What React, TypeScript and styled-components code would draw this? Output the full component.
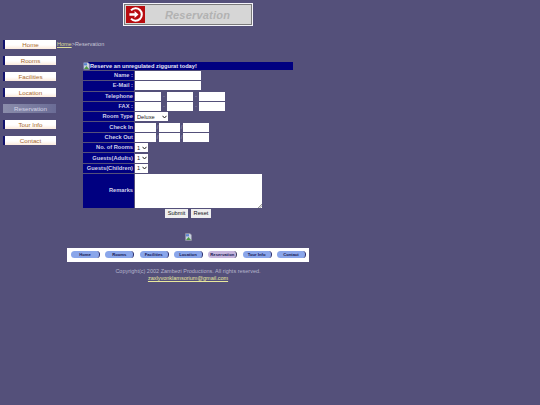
import React from 'react'
import styled, { createGlobalStyle } from 'styled-components'

const GlobalStyle = createGlobalStyle`
  html, body {
    margin: 0;
    padding: 0;
    background: #54507a;
    font-family: "Liberation Sans", Arial, sans-serif;
  }
`

const chevron = "url(\"data:image/svg+xml,%3Csvg xmlns='http://www.w3.org/2000/svg' width='5' height='4' viewBox='0 0 5 4'%3E%3Cpath d='M0.5 0.8L2.5 3L4.5 0.8' fill='none' stroke='%23222' stroke-width='1'/%3E%3C/svg%3E\")"

const Page = styled.div`
  width: 376px;
  height: 405px;
  display: flex;
  flex-direction: column;
  align-items: center;
  padding-top: 3px;
  box-sizing: border-box;
`

const Banner = styled.div`
  width: 130px;
  height: 23px;
  box-sizing: border-box;
  border: 1px solid #f4f4fa;
  background: #d6d6d6;
  box-shadow: inset 0 0 0 1px #7a7a7a;
  padding: 2px;
  display: flex;
  align-items: stretch;
`

const BannerIcon = styled.div`
  width: 19px;
  background: #b80c10;
  display: flex;
  align-items: center;
  justify-content: center;
`

const BannerTitle = styled.div`
  flex: 1;
  text-align: center;
  font-size: 11px;
  line-height: 19px;
  font-weight: bold;
  font-style: italic;
  letter-spacing: 0.2px;
  color: #b2b2b2;
`

const Body = styled.div`
  align-self: stretch;
  display: flex;
  align-items: flex-start;
  margin-top: 14px;
`

const SideNav = styled.nav`
  width: 57px;
  flex: none;
  padding: 0 1px 0 3px;
  box-sizing: border-box;
  display: flex;
  flex-direction: column;
  gap: 7px;
`

const SideLink = styled.a<{ $active?: boolean }>`
  height: 9px;
  box-sizing: border-box;
  font-size: 6.2px;
  line-height: 9px;
  text-align: center;
  color: ${({ $active }) => ($active ? '#d4d4e6' : '#a8692c')};
  background: ${({ $active }) =>
    $active ? 'linear-gradient(90deg, #8a8caa, #6a6c96)' : 'linear-gradient(#ffffff 55%, #fbeadc)'};
  border-left: 2px solid ${({ $active }) => ($active ? '#8a8caa' : '#12126e')};
`

const Main = styled.div`
  flex: 1;
  min-width: 0;
`

const Crumbs = styled.div`
  font-size: 5.5px;
  line-height: 8px;
  color: #c6c6d6;
  a {
    color: #dcdc98;
    text-decoration: underline;
  }
`

const FormTable = styled.table`
  margin: 13px 0 0 25px;
  width: 212px;
  border-collapse: separate;
  border-spacing: 1px;
  table-layout: fixed;
  font-size: 5.7px;
  font-weight: bold;
  color: #cfcfe8;
`

const LabelCol = styled.col`
  width: 51px;
`

const TitleCell = styled.td`
  height: 8px;
  padding: 0;
  background: #000080;
  color: #e4e4f4;
  line-height: 8px;
  white-space: nowrap;
`

const TitleInner = styled.div`
  display: flex;
  align-items: center;
`

const LabelCell = styled.td`
  height: 9.3px;
  padding: 0 1px 0 0;
  background: #000080;
  text-align: right;
  white-space: nowrap;
  vertical-align: middle;
  line-height: 9px;
`

const FieldCell = styled.td`
  padding: 0;
  vertical-align: middle;
  line-height: 0;
  white-space: nowrap;
`

const FieldRow = styled.div`
  display: flex;
  align-items: center;
`

const Sep = styled.span<{ $w: number }>`
  width: ${({ $w }) => $w}px;
  text-align: center;
  font-size: 5.5px;
  line-height: 9px;
  font-weight: normal;
  color: #a4a4c0;
`

const Field = styled.input<{ $w: number }>`
  width: ${({ $w }) => $w}px;
  height: 9px;
  box-sizing: border-box;
  border: 0;
  padding: 0;
  margin: 0;
  background: #fff;
  display: block;
`

const Picker = styled.select<{ $w: number }>`
  width: ${({ $w }) => $w}px;
  height: 9px;
  box-sizing: border-box;
  border: 0;
  padding: 0 0 0 2px;
  margin: 0;
  appearance: none;
  background: #fff ${chevron} no-repeat right 1.5px center;
  font-family: "Liberation Sans", Arial, sans-serif;
  font-size: 5.7px;
  color: #222;
  display: block;
`

const Remarks = styled.textarea`
  display: block;
  width: 127px;
  height: 34px;
  box-sizing: border-box;
  border: 0;
  margin: 0;
  padding: 0;
  resize: none;
  background: linear-gradient(135deg, transparent 50%, #9a9a9a 50%, #fff 70%, #9a9a9a 70%, #fff 85%) no-repeat right 0 bottom 0 / 4px 4px, #fff;
`

const Buttons = styled.div`
  width: 210px;
  margin: 0 0 0 26px;
  display: flex;
  justify-content: center;
  gap: 3px;
`

const FormButton = styled.button<{ $w: number }>`
  width: ${({ $w }) => $w}px;
  height: 9px;
  box-sizing: border-box;
  padding: 0;
  border: 0;
  background: #efefef;
  font-family: "Liberation Sans", Arial, sans-serif;
  font-size: 5.7px;
  line-height: 9px;
  color: #111;
`

const BrokenWrap = styled.div<{ $center?: boolean }>`
  display: ${({ $center }) => ($center ? 'flex' : 'inline-flex')};
  flex: none;
  margin-top: ${({ $center }) => ($center ? '15px' : '0')};
  line-height: 0;
`

const FooterBar = styled.div`
  width: 242px;
  height: 14px;
  margin-top: 7px;
  box-sizing: border-box;
  background: #fff;
  padding: 0 3px 0 4px;
  display: flex;
  align-items: center;
  justify-content: space-between;
`

const Pill = styled.a<{ $active?: boolean }>`
  width: 29px;
  height: 7px;
  box-sizing: border-box;
  border-radius: 4px;
  font-size: 4.2px;
  font-weight: bold;
  line-height: 7px;
  text-align: center;
  color: #141450;
  background: ${({ $active }) => ($active ? '#c4b4dc' : '#8aa6ea')};
  border-right: 1px solid ${({ $active }) => ($active ? '#3c3c5c' : '#30306c')};
`

const Copy = styled.div`
  margin-top: 6px;
  font-size: 5.5px;
  line-height: 7px;
  color: #b4b4cc;
  text-align: center;
  a {
    display: block;
    color: #e8e89c;
    text-decoration: underline;
  }
`

const BrokenImage = () => (
  <svg width="7" height="8" viewBox="0 0 7 8">
    <path d="M0.5 0.5H5L6.5 2V7.5H0.5Z" fill="#c8d0e0" stroke="#8c8c98" strokeWidth="0.6" />
    <path d="M1 1.2H4V3.4H1Z" fill="#5a84d0" />
    <path d="M1 7L3.5 4L6 7Z" fill="#4c9a44" />
  </svg>
)

const sideItems = ['Home', 'Rooms', 'Facilities', 'Location', 'Reservation', 'Tour Info', 'Contact']

const PhoneFields = () => (
  <FieldRow>
    <Field $w={26} /><Sep $w={6}>-</Sep><Field $w={26} /><Sep $w={6}>-</Sep><Field $w={26} />
  </FieldRow>
)

const DateFields = () => (
  <FieldRow>
    <Field $w={21} /><Sep $w={3}>/</Sep><Field $w={21} /><Sep $w={3}>/</Sep><Field $w={26} />
  </FieldRow>
)

const App: React.FC = () => {
  return (
    <Page>
      <GlobalStyle />
      <Banner>
        <BannerIcon>
          <svg width="15" height="15" viewBox="0 0 16 16">
            <path d="M3.2 3.6A6.6 6.6 0 1 1 3.2 12.4" fill="none" stroke="#fff" strokeWidth="2.2" />
            <path d="M1.5 6.7H7V4.2L11.2 8L7 11.8V9.3H1.5Z" fill="#fff" />
          </svg>
        </BannerIcon>
        <BannerTitle>Reservation</BannerTitle>
      </Banner>
      <Body>
        <SideNav>
          {sideItems.map((item) => (
            <SideLink key={item} $active={item === 'Reservation'}>{item}</SideLink>
          ))}
        </SideNav>
        <Main>
          <Crumbs><a>Home</a>&gt;Reservation</Crumbs>
          <FormTable>
            <colgroup>
              <LabelCol />
              <col />
            </colgroup>
            <tbody>
              <tr>
                <TitleCell colSpan={2}>
                  <TitleInner><BrokenWrap><BrokenImage /></BrokenWrap>Reserve an unregulated ziggurat today!</TitleInner>
                </TitleCell>
              </tr>
              <tr>
                <LabelCell>Name :</LabelCell>
                <FieldCell><Field $w={66} /></FieldCell>
              </tr>
              <tr>
                <LabelCell>E-Mail :</LabelCell>
                <FieldCell><Field $w={66} /></FieldCell>
              </tr>
              <tr>
                <LabelCell>Telephone</LabelCell>
                <FieldCell><PhoneFields /></FieldCell>
              </tr>
              <tr>
                <LabelCell>FAX :</LabelCell>
                <FieldCell><PhoneFields /></FieldCell>
              </tr>
              <tr>
                <LabelCell>Room Type</LabelCell>
                <FieldCell><Picker $w={33}><option>Deluxe</option></Picker></FieldCell>
              </tr>
              <tr>
                <LabelCell>Check In</LabelCell>
                <FieldCell><DateFields /></FieldCell>
              </tr>
              <tr>
                <LabelCell>Check Out</LabelCell>
                <FieldCell><DateFields /></FieldCell>
              </tr>
              <tr>
                <LabelCell>No. of Rooms</LabelCell>
                <FieldCell><Picker $w={13}><option>1</option></Picker></FieldCell>
              </tr>
              <tr>
                <LabelCell>Guests(Adults)</LabelCell>
                <FieldCell><Picker $w={13}><option>1</option></Picker></FieldCell>
              </tr>
              <tr>
                <LabelCell>Guests(Children)</LabelCell>
                <FieldCell><Picker $w={13}><option>1</option></Picker></FieldCell>
              </tr>
              <tr>
                <LabelCell>Remarks</LabelCell>
                <FieldCell><Remarks /></FieldCell>
              </tr>
            </tbody>
          </FormTable>
          <Buttons>
            <FormButton $w={23}>Submit</FormButton>
            <FormButton $w={20}>Reset</FormButton>
          </Buttons>
        </Main>
      </Body>
      <BrokenWrap $center><BrokenImage /></BrokenWrap>
      <FooterBar>
        {sideItems.map((item) => (
          <Pill key={item} $active={item === 'Reservation'}>{item}</Pill>
        ))}
      </FooterBar>
      <Copy>
        Copyright(c) 2002 Zambezi Productions. All rights reserved.
        <a>zaxlyvonklamsorium@gmail.com</a>
      </Copy>
    </Page>
  )
}

export default App
